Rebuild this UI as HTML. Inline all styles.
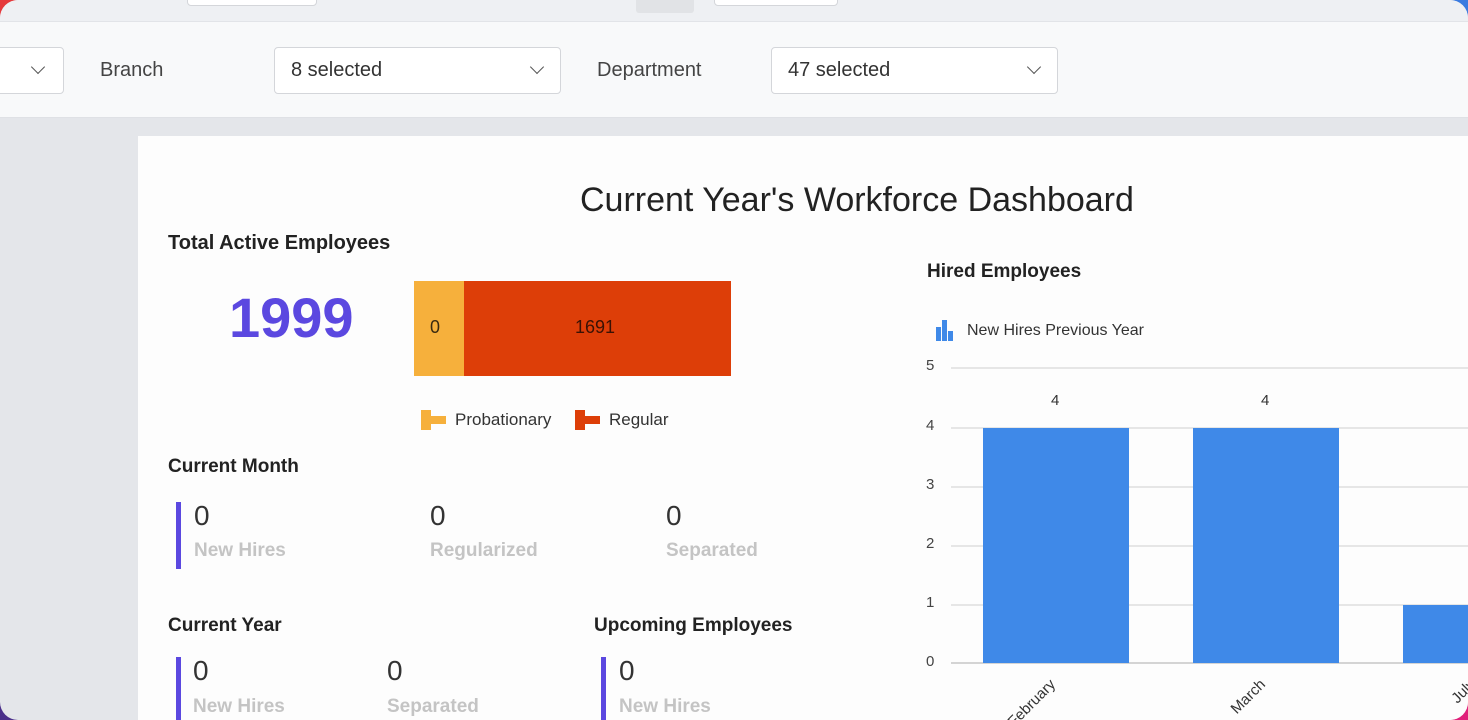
<!DOCTYPE html>
<html><head><meta charset="utf-8"><style>
*{margin:0;padding:0;box-sizing:border-box}
html,body{width:1468px;height:720px;overflow:hidden}
body{background:#222;font-family:"Liberation Sans",sans-serif;position:relative}
.corner{position:absolute;width:40px;height:40px}
.frame{position:absolute;left:0;top:0;width:1468px;height:720px;border-radius:18px;overflow:hidden;background:#e4e6ea}
.top{position:absolute;left:0;top:0;width:100%;height:22px;background:#eef0f3;border-bottom:1px solid #e2e4e8}
.bar{position:absolute;left:0;top:22px;width:100%;height:96px;background:#f8f9fa;border-bottom:1px solid #dfe1e5}
.sel{position:absolute;top:47px;height:47px;background:#fff;border:1px solid #d4d6da;border-radius:4px;font-size:20px;color:#333;padding:11px 16px}
.chev{position:absolute;right:18px;top:14px;width:10px;height:10px;border-right:1.8px solid #555;border-bottom:1.8px solid #555;transform:rotate(45deg)}
.lbl{position:absolute;top:59px;font-size:20px;color:#444}
.card{position:absolute;left:138px;top:136px;width:1330px;height:584px;background:#fdfdfd}
.t{position:absolute;white-space:nowrap}
.h{font-weight:bold;font-size:19px;color:#222}
.num{font-size:28px;color:#333}
.sub{font-size:19px;color:#c4c4c4;font-weight:bold}
.vbar{position:absolute;width:5px;background:#5b48e0}
.grid{position:absolute;left:951px;width:517px;height:2px;background:#e6e6e6}
.yl{position:absolute;left:926px;font-size:15px;color:#444}
.b{position:absolute;background:#3f89e8}
.xl{position:absolute;font-size:15px;color:#333;white-space:nowrap;transform:rotate(-45deg);transform-origin:right top;text-align:right;width:100px}
</style></head><body>
<div class="corner" style="left:0;top:0;background:#e5393b"></div>
<div class="corner" style="right:0;top:0;background:#3a7be0"></div>
<div class="corner" style="left:0;bottom:0;background:#4a2f8a"></div>
<div class="corner" style="right:0;bottom:0;background:#e0207a"></div>
<div class="frame">
<div class="top">
 <div style="position:absolute;left:187px;top:-2px;width:130px;height:8px;background:#fff;border:1px solid #d4d6da;border-radius:0 0 4px 4px"></div>
 <div style="position:absolute;left:636px;top:0;width:58px;height:13px;background:#e1e3e6;border-radius:0 0 3px 3px"></div>
 <div style="position:absolute;left:714px;top:-2px;width:124px;height:8px;background:#fff;border:1px solid #d4d6da;border-radius:0 0 4px 4px"></div>
</div>
<div class="bar"></div>
<div class="sel" style="left:-10px;width:74px"><div class="chev" style="right:20px"></div></div>
<div class="lbl" style="left:100px">Branch</div>
<div class="sel" style="left:274px;width:287px">8 selected<div class="chev"></div></div>
<div class="lbl" style="left:597px">Department</div>
<div class="sel" style="left:771px;width:287px">47 selected<div class="chev"></div></div>
<div class="card"></div>
<div class="t" style="left:580px;top:181px;font-size:34px;color:#222">Current Year's Workforce Dashboard</div>
<div class="t h" style="left:168px;top:232px;font-size:20px">Total Active Employees</div>
<div class="t" style="left:229px;top:285px;font-size:56px;font-weight:bold;color:#5b48e0">1999</div>
<div style="position:absolute;left:414px;top:281px;width:50px;height:95px;background:#f6b03c"></div>
<div style="position:absolute;left:464px;top:281px;width:267px;height:95px;background:#dd3e08"></div>
<div class="t" style="left:430px;top:317px;font-size:18px;color:#3a2a10">0</div>
<div class="t" style="left:575px;top:317px;font-size:18px;color:#3a1205">1691</div>
<div style="position:absolute;left:421px;top:410px;width:10px;height:20px;background:#f6b03c"></div>
<div style="position:absolute;left:431px;top:416px;width:15px;height:8px;background:#f6b03c"></div>
<div class="t" style="left:455px;top:410px;font-size:17px;color:#333">Probationary</div>
<div style="position:absolute;left:575px;top:410px;width:10px;height:20px;background:#dd3e08"></div>
<div style="position:absolute;left:585px;top:416px;width:15px;height:8px;background:#dd3e08"></div>
<div class="t" style="left:609px;top:410px;font-size:17px;color:#333">Regular</div>
<div class="t h" style="left:168px;top:456px">Current Month</div>
<div class="vbar" style="left:176px;top:502px;height:67px"></div>
<div class="t num" style="left:194px;top:500px">0</div><div class="t sub" style="left:194px;top:540px">New Hires</div>
<div class="t num" style="left:430px;top:500px">0</div><div class="t sub" style="left:430px;top:540px">Regularized</div>
<div class="t num" style="left:666px;top:500px">0</div><div class="t sub" style="left:666px;top:540px">Separated</div>
<div class="t h" style="left:168px;top:615px">Current Year</div>
<div class="vbar" style="left:176px;top:657px;height:63px"></div>
<div class="t num" style="left:193px;top:655px">0</div><div class="t sub" style="left:193px;top:696px">New Hires</div>
<div class="t num" style="left:387px;top:655px">0</div><div class="t sub" style="left:387px;top:696px">Separated</div>
<div class="t h" style="left:594px;top:615px">Upcoming Employees</div>
<div class="vbar" style="left:601px;top:657px;height:63px"></div>
<div class="t num" style="left:619px;top:655px">0</div><div class="t sub" style="left:619px;top:696px">New Hires</div>
<div class="t h" style="left:927px;top:261px;font-size:19px">Hired Employees</div>
<div style="position:absolute;left:936px;top:327px;width:5px;height:14px;background:#3f89e8"></div>
<div style="position:absolute;left:942px;top:320px;width:5px;height:21px;background:#3f89e8"></div>
<div style="position:absolute;left:948px;top:331px;width:5px;height:10px;background:#3f89e8"></div>
<div class="t" style="left:967px;top:322px;font-size:16px;color:#333">New Hires Previous Year</div>
<div class="grid" style="top:367px"></div><div class="grid" style="top:427px"></div><div class="grid" style="top:486px"></div>
<div class="grid" style="top:545px"></div><div class="grid" style="top:604px"></div><div class="grid" style="top:662px;background:#d4d4d4"></div>
<div class="yl" style="top:357px">5</div><div class="yl" style="top:417px">4</div><div class="yl" style="top:476px">3</div>
<div class="yl" style="top:535px">2</div><div class="yl" style="top:594px">1</div><div class="yl" style="top:653px">0</div>
<div class="b" style="left:983px;top:428px;width:146px;height:235px"></div>
<div class="b" style="left:1193px;top:428px;width:146px;height:235px"></div>
<div class="b" style="left:1403px;top:605px;width:70px;height:58px"></div>
<div class="t" style="left:1051px;top:392px;font-size:15px;color:#333">4</div>
<div class="t" style="left:1261px;top:392px;font-size:15px;color:#333">4</div>
<div class="xl" style="left:947px;top:676px">February</div>
<div class="xl" style="left:1157px;top:676px">March</div>
<div class="xl" style="left:1367px;top:676px">July</div>
</div>
</body></html>
